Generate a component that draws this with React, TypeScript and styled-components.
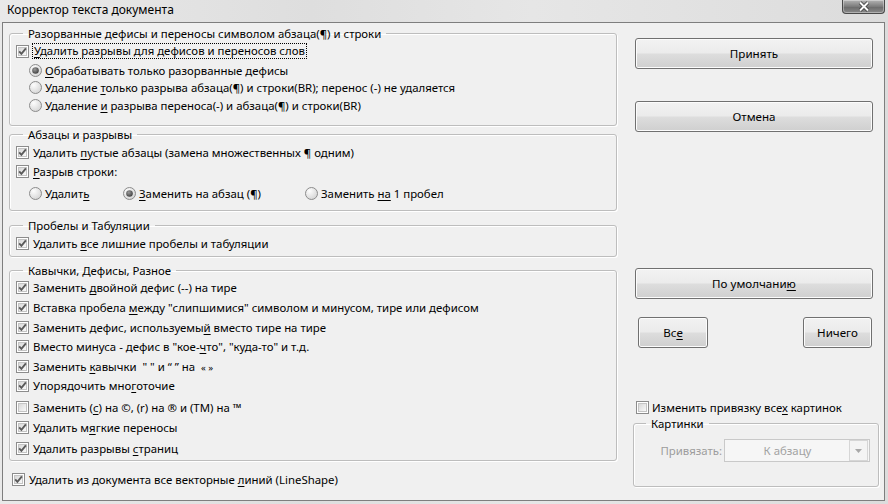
import React from 'react';
import styled, { createGlobalStyle } from 'styled-components';

const GlobalStyle = createGlobalStyle`
  body {
    margin: 0;
    font-family: "Noto Sans", "Open Sans", sans-serif;
    font-size: 11.4px;
    color: #000;
  }
`;

const U = styled.span`
  text-decoration: underline;
  text-underline-offset: 2px;
`;

const CheckBox: React.FC<{ checked?: boolean }> = ({ checked }) => (
  <svg width="13" height="13" viewBox="0 0 13 13" style={{ flex: 'none' }}>
    <defs>
      <linearGradient id="cbg" x1="0" y1="0" x2="1" y2="1">
        <stop offset="0" stopColor="#d6d6d6" />
        <stop offset="1" stopColor="#fbfbfb" />
      </linearGradient>
    </defs>
    <rect x="0.5" y="0.5" width="12" height="12" fill="#fff" stroke="#8c8c8c" />
    <rect x="2.5" y="2.5" width="8" height="8" fill="url(#cbg)" stroke="#c4c4c4" />
    {checked && (
      <path d="M3.2 6.4 L5.4 8.8 L9.9 3.4" fill="none" stroke="#5a5a5a" strokeWidth="1.9" />
    )}
  </svg>
);

const Radio: React.FC<{ checked?: boolean }> = ({ checked }) => (
  <svg width="13" height="13" viewBox="0 0 13 13" style={{ flex: 'none' }}>
    <defs>
      <radialGradient id="rbg" cx="0.35" cy="0.3" r="0.8">
        <stop offset="0" stopColor="#fdfdfd" />
        <stop offset="1" stopColor="#d2d2d2" />
      </radialGradient>
      <radialGradient id="rdot" cx="0.4" cy="0.35" r="0.7">
        <stop offset="0" stopColor="#9a9a9a" />
        <stop offset="1" stopColor="#3c3c3c" />
      </radialGradient>
    </defs>
    <circle cx="6.5" cy="6.5" r="6" fill="url(#rbg)" stroke="#8c8c8c" />
    {checked && <circle cx="6.5" cy="6.5" r="3.3" fill="url(#rdot)" />}
  </svg>
);

const Window = styled.div`
  width: 888px;
  height: 504px;
  display: flex;
  flex-direction: column;
  background: linear-gradient(90deg, #e9e9e9 0%, #dedede 35%, #e6e6e6 60%, #dcdcdc 100%);
  overflow: hidden;
`;

const TitleBar = styled.div`
  height: 22px;
  flex: none;
  display: flex;
  justify-content: space-between;
  align-items: flex-start;
`;

const Title = styled.div`
  padding: 2px 0 0 7px;
  line-height: 16px;
  font-size: 12px;
`;

const CloseButton = styled.div`
  width: 41px;
  height: 13px;
  margin-right: 3px;
  border: 1px solid #4a4a4a;
  border-top: none;
  border-radius: 0 0 4px 4px;
  background: linear-gradient(#b4b4b4, #7c7c7c 50%, #6a6a6a 51%, #8a8a8a);
  display: flex;
  align-items: center;
  justify-content: center;
  box-shadow: inset 0 0 0 1px rgba(255, 255, 255, 0.35);
`;

const Body = styled.div`
  flex: 1;
  margin: 0 3px 3px 2px;
  border: 1px solid #7e7e7e;
  background: #f0f0f0;
  display: flex;
`;

const LeftColumn = styled.div`
  width: 608px;
  padding: 3px 0 0 6px;
  display: flex;
  flex-direction: column;
`;

const Group = styled.fieldset<{ $gap?: number; $padBottom: number }>`
  margin: ${(p) => p.$gap ?? 0}px 0 0 0;
  padding: 0 0 ${(p) => p.$padBottom}px 6px;
  border: 1px solid #bdbdbd;
  border-radius: 3px;
  box-shadow: inset 1px 1px 0 #fff, 1px 1px 0 #fff;
  min-width: 0;
`;

const Legend = styled.legend<{ $offset?: number }>`
  margin-left: ${(p) => p.$offset ?? 7}px;
  padding: 0 5px;
  line-height: 15px;
  font-size: 11.4px;
`;

const Row = styled.div<{ $top?: number; $indent?: number; $gap?: number }>`
  display: flex;
  align-items: center;
  height: 18px;
  margin-top: ${(p) => p.$top ?? 0}px;
  padding-left: ${(p) => p.$indent ?? 0}px;
  gap: ${(p) => p.$gap ?? 4}px;
  white-space: nowrap;
`;

const RadioLine = styled.div<{ $top?: number }>`
  display: flex;
  height: 17.5px;
  padding-left: 13px;
  margin-top: ${(p) => p.$top ?? 0}px;
`;

const RadioItem = styled.div<{ $width?: number }>`
  display: flex;
  align-items: center;
  gap: 3px;
  width: ${(p) => (p.$width ? `${p.$width}px` : 'auto')};
  white-space: nowrap;
`;

const Focused = styled.span`
  outline: 1px dotted #000;
  outline-offset: 0;
  padding: 0 1px;
  line-height: 14px;
`;

const BottomRow = styled(Row)`
  padding-left: 3px;
`;

const RightColumn = styled.div`
  width: 246px;
  margin-left: 16px;
  padding-top: 15px;
  display: flex;
  flex-direction: column;
`;

const Button = styled.button<{ $top: number; $width?: number }>`
  width: ${(p) => p.$width ?? 238}px;
  height: 31px;
  margin-top: ${(p) => p.$top}px;
  margin-left: ${(p) => (p.$width ? 0 : 2)}px;
  border: 1px solid #707070;
  border-radius: 3px;
  background: linear-gradient(#f2f2f2 0%, #ebebeb 48%, #dddddd 52%, #cfcfcf 100%);
  box-shadow: inset 0 0 0 1px #fcfcfc;
  font-family: "Noto Sans", "Open Sans", sans-serif;
  font-size: 11.6px;
  color: #000;
  padding: 0;
`;

const ButtonPair = styled.div`
  display: flex;
  justify-content: space-between;
  padding: 0 7px 0 5px;
  margin-top: 18px;
`;

const PictGroup = styled.fieldset`
  margin: 0;
  padding: 8px 8px 24px 0;
  border: 1px solid #bdbdbd;
  border-radius: 3px;
  box-shadow: inset 1px 1px 0 #fff, 1px 1px 0 #fff;
  display: flex;
  justify-content: flex-end;
  align-items: center;
  min-width: 0;
`;

const DisabledLabel = styled.span`
  color: #9d9d9d;
  margin-right: 2px;
`;

const Select = styled.div`
  width: 146px;
  height: 23px;
  box-sizing: border-box;
  border: 1px solid #c9c9c9;
  background: #f6f6f6;
  display: flex;
  align-items: center;
  padding: 1px;
`;

const SelectValue = styled.span`
  flex: 1;
  text-align: center;
  color: #a2a2a2;
`;

const SelectArrow = styled.div`
  width: 17px;
  height: 19px;
  border: 1px solid #d6d6d6;
  background: #f4f4f4;
  display: flex;
  align-items: center;
  justify-content: center;
`;

const quoteItems: { label: React.ReactNode; checked: boolean; top: number }[] = [
  { label: <>Заменить <U>д</U>войной дефис (--) на тире</>, checked: true, top: 0 },
  { label: <>Вставка пробела <U>м</U>ежду "слипшимися" символом и минусом, тире или дефисом</>, checked: true, top: 2 },
  { label: <>Заменить дефис, используемы<U>й</U> вместо тире на тире</>, checked: true, top: 2 },
  { label: <>Вместо минуса - дефис в "кое-<U>ч</U>то", "куда-то" и т.д.</>, checked: true, top: 1 },
  { label: <>Заменить <U>к</U>авычки&nbsp; " " и “ ” на &nbsp;<small>« »</small></>, checked: true, top: 2 },
  { label: <>Упорядочить мно<U>г</U>оточие</>, checked: true, top: 1 },
  { label: <>Заменить (<U>с</U>) на ©, (r) на ® и (TM) на ™</>, checked: false, top: 4 },
  { label: <>Удалить м<U>я</U>гкие переносы</>, checked: true, top: 2 },
  { label: <>Удалить разрывы <U>с</U>траниц</>, checked: true, top: 3 },
];

export default function App() {
  return (
    <>
      <GlobalStyle />
      <Window>
        <TitleBar>
          <Title>Корректор текста документа</Title>
          <CloseButton>
            <svg width="14" height="11" viewBox="0 0 14 11">
              <path d="M3 1.5 L11 9.5 M11 1.5 L3 9.5" stroke="#3a3a3a" strokeWidth="3.6" />
              <path d="M3 1.5 L11 9.5 M11 1.5 L3 9.5" stroke="#fafafa" strokeWidth="2" />
            </svg>
          </CloseButton>
        </TitleBar>
        <Body>
          <LeftColumn>
            <Group $padBottom={11}>
              <Legend>Разорванные дефисы и переносы символом абзаца(¶) и строки</Legend>
              <Row $top={1}>
                <CheckBox checked />
                <Focused><U>У</U>далить разрывы для дефисов и переносов слов</Focused>
              </Row>
              <RadioLine $top={1.5}>
                <RadioItem><Radio checked /><span><U>О</U>брабатывать только разорванные дефисы</span></RadioItem>
              </RadioLine>
              <RadioLine>
                <RadioItem><Radio /><span>Удаление <U>т</U>олько разрыва абзаца(¶) и строки(BR); перенос (-) не удаляется</span></RadioItem>
              </RadioLine>
              <RadioLine>
                <RadioItem><Radio /><span>Удаление <U>и</U> разрыва переноса(-) и абзаца(¶) и строки(BR)</span></RadioItem>
              </RadioLine>
            </Group>

            <Group $gap={1} $padBottom={8}>
              <Legend>Абзацы и разрывы</Legend>
              <Row $top={1.5}>
                <CheckBox checked />
                <span>Удалить <U>п</U>устые абзацы (замена множественных ¶ одним)</span>
              </Row>
              <Row $top={1}>
                <CheckBox checked />
                <span><U>Р</U>азрыв строки:</span>
              </Row>
              <RadioLine $top={4}>
                <RadioItem $width={94}><Radio /><span>Удалит<U>ь</U></span></RadioItem>
                <RadioItem $width={182}><Radio checked /><span><U>З</U>аменить на абзац (¶)</span></RadioItem>
                <RadioItem><Radio /><span>Заменить <U>на</U> 1 пробел</span></RadioItem>
              </RadioLine>
            </Group>

            <Group $gap={7} $padBottom={4}>
              <Legend>Пробелы и Табуляции</Legend>
              <Row $top={1}>
                <CheckBox checked />
                <span>Удалить <U>в</U>се лишние пробелы и табуляции</span>
              </Row>
            </Group>

            <Group $gap={6} $padBottom={3}>
              <Legend>Кавычки, Дефисы, Разное</Legend>
              {quoteItems.map((item, index) => (
                <Row key={index} $top={item.top}>
                  <CheckBox checked={item.checked} />
                  <span>{item.label}</span>
                </Row>
              ))}
            </Group>

            <BottomRow $top={9}>
              <CheckBox checked />
              <span>Удалить из документа все векторные <U>л</U>иний (LineShape)</span>
            </BottomRow>
          </LeftColumn>

          <RightColumn>
            <Button $top={0}>Принять</Button>
            <Button $top={32}>Отмена</Button>
            <Button $top={136}>По умолчани<U>ю</U></Button>
            <ButtonPair>
              <Button $top={0} $width={70}>Вс<U>е</U></Button>
              <Button $top={0} $width={69}>Ничего</Button>
            </ButtonPair>
            <Row $top={50} $indent={3} $gap={3}>
              <CheckBox />
              <span>Изменить привязку все<U>х</U> картинок</span>
            </Row>
            <PictGroup>
              <Legend $offset={12}>Картинки</Legend>
              <DisabledLabel>Привязать:</DisabledLabel>
              <Select>
                <SelectValue>К абзацу</SelectValue>
                <SelectArrow>
                  <svg width="7" height="4" viewBox="0 0 7 4">
                    <path d="M0 0 H7 L3.5 4 Z" fill="#a8a8a8" />
                  </svg>
                </SelectArrow>
              </Select>
            </PictGroup>
          </RightColumn>
        </Body>
      </Window>
    </>
  );
}
